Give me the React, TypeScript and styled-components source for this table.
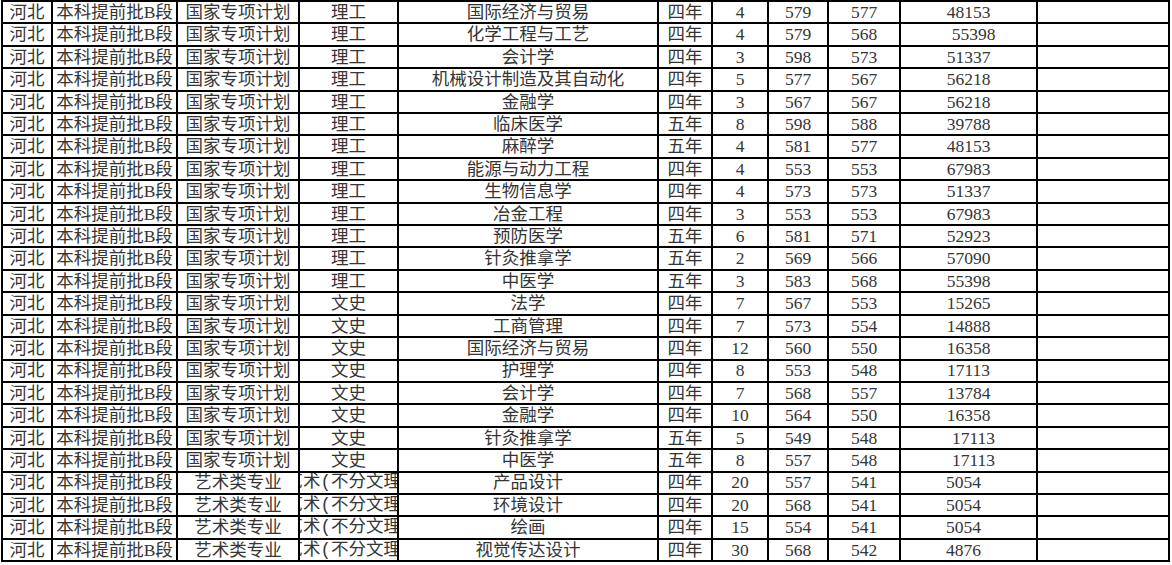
import styled, { createGlobalStyle } from "styled-components";

const GlobalStyle = createGlobalStyle`
  html, body {
    margin: 0;
    padding: 0;
    background: #fff;
  }
  body {
    font-family: "Liberation Serif", "Noto Sans CJK SC", serif;
    color: #353535;
  }
`;

type Row = {
  kind: string;
  subject: string;
  major: string;
  years: string;
  count: string;
  max: string;
  min: string;
  rank: string;
  nudge?: number;
};

const li = "理工";
const wen = "文史";
const art = "艺术(不分文理)";

const rows: Row[] = [
  { kind: "国家专项计划", subject: li, major: "国际经济与贸易", years: "四年", count: "4", max: "579", min: "577", rank: "48153" },
  { kind: "国家专项计划", subject: li, major: "化学工程与工艺", years: "四年", count: "4", max: "579", min: "568", rank: "55398", nudge: 10 },
  { kind: "国家专项计划", subject: li, major: "会计学", years: "四年", count: "3", max: "598", min: "573", rank: "51337" },
  { kind: "国家专项计划", subject: li, major: "机械设计制造及其自动化", years: "四年", count: "5", max: "577", min: "567", rank: "56218" },
  { kind: "国家专项计划", subject: li, major: "金融学", years: "四年", count: "3", max: "567", min: "567", rank: "56218" },
  { kind: "国家专项计划", subject: li, major: "临床医学", years: "五年", count: "8", max: "598", min: "588", rank: "39788" },
  { kind: "国家专项计划", subject: li, major: "麻醉学", years: "五年", count: "4", max: "581", min: "577", rank: "48153" },
  { kind: "国家专项计划", subject: li, major: "能源与动力工程", years: "四年", count: "4", max: "553", min: "553", rank: "67983" },
  { kind: "国家专项计划", subject: li, major: "生物信息学", years: "四年", count: "4", max: "573", min: "573", rank: "51337" },
  { kind: "国家专项计划", subject: li, major: "冶金工程", years: "四年", count: "3", max: "553", min: "553", rank: "67983" },
  { kind: "国家专项计划", subject: li, major: "预防医学", years: "五年", count: "6", max: "581", min: "571", rank: "52923" },
  { kind: "国家专项计划", subject: li, major: "针灸推拿学", years: "五年", count: "2", max: "569", min: "566", rank: "57090" },
  { kind: "国家专项计划", subject: li, major: "中医学", years: "五年", count: "3", max: "583", min: "568", rank: "55398" },
  { kind: "国家专项计划", subject: wen, major: "法学", years: "四年", count: "7", max: "567", min: "553", rank: "15265" },
  { kind: "国家专项计划", subject: wen, major: "工商管理", years: "四年", count: "7", max: "573", min: "554", rank: "14888" },
  { kind: "国家专项计划", subject: wen, major: "国际经济与贸易", years: "四年", count: "12", max: "560", min: "550", rank: "16358" },
  { kind: "国家专项计划", subject: wen, major: "护理学", years: "四年", count: "8", max: "553", min: "548", rank: "17113" },
  { kind: "国家专项计划", subject: wen, major: "会计学", years: "四年", count: "7", max: "568", min: "557", rank: "13784" },
  { kind: "国家专项计划", subject: wen, major: "金融学", years: "四年", count: "10", max: "564", min: "550", rank: "16358" },
  { kind: "国家专项计划", subject: wen, major: "针灸推拿学", years: "五年", count: "5", max: "549", min: "548", rank: "17113", nudge: 10 },
  { kind: "国家专项计划", subject: wen, major: "中医学", years: "五年", count: "8", max: "557", min: "548", rank: "17113", nudge: 10 },
  { kind: "艺术类专业", subject: art, major: "产品设计", years: "四年", count: "20", max: "557", min: "541", rank: "5054", nudge: -10 },
  { kind: "艺术类专业", subject: art, major: "环境设计", years: "四年", count: "20", max: "568", min: "541", rank: "5054", nudge: -10 },
  { kind: "艺术类专业", subject: art, major: "绘画", years: "四年", count: "15", max: "554", min: "541", rank: "5054", nudge: -10 },
  { kind: "艺术类专业", subject: art, major: "视觉传达设计", years: "四年", count: "30", max: "568", min: "542", rank: "4876", nudge: -10 },
];

// spreadsheet grid: outer border on left/top, every cell draws its right/bottom line
const Sheet = styled.div`
  margin-left: 1px;
  width: max-content;
  display: grid;
  grid-template-columns: 50px 125px 122px 99px 260px 54px 56px 60px 72px 137px 132px;
  grid-auto-rows: 22.42px;
  border-left: 2px solid #000;
  border-top: 2px solid #000;
`;

const Cell = styled.div<{ $nudge?: number; $mono?: boolean }>`
  box-sizing: border-box;
  border-right: 2px solid #000;
  border-bottom: 2px solid #000;
  display: flex;
  align-items: center;
  justify-content: center;
  overflow: hidden;
  white-space: nowrap;
  font-size: 17.5px;
  line-height: 1;
  padding-top: 1px;
  padding-left: ${(p) => (p.$nudge && p.$nudge > 0 ? p.$nudge : 0)}px;
  padding-right: ${(p) => (p.$nudge && p.$nudge < 0 ? -p.$nudge : 0)}px;
  ${(p) =>
    p.$mono &&
    `font-family: "Liberation Mono", "Noto Sans CJK SC", monospace;`}
`;

export default function App() {
  return (
    <>
      <GlobalStyle />
      <Sheet>
        {rows.map((r, i) => (
          <Row key={i} row={r} />
        ))}
      </Sheet>
    </>
  );
}

function Row({ row }: { row: Row }) {
  return (
    <>
      <Cell>河北</Cell>
      <Cell>本科提前批B段</Cell>
      <Cell>{row.kind}</Cell>
      <Cell $mono={row.subject === art}>{row.subject}</Cell>
      <Cell>{row.major}</Cell>
      <Cell>{row.years}</Cell>
      <Cell>{row.count}</Cell>
      <Cell>{row.max}</Cell>
      <Cell>{row.min}</Cell>
      <Cell $nudge={row.nudge}>{row.rank}</Cell>
      <Cell />
    </>
  );
}
